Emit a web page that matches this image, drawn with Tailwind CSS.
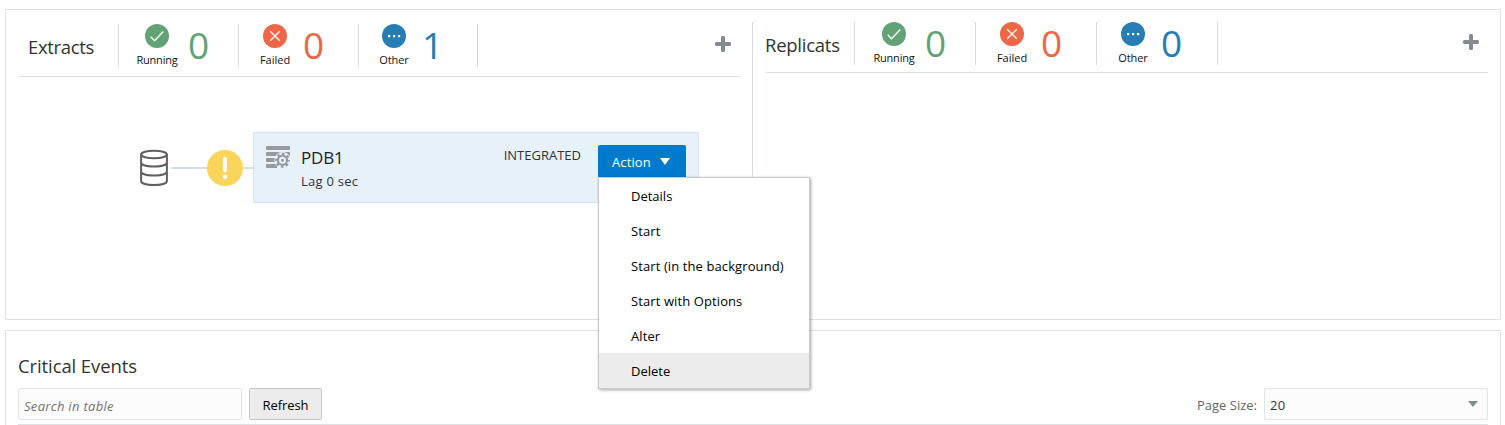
<!DOCTYPE html>
<html lang="en">
<head>
<meta charset="utf-8">
<title>Extracts and Replicats</title>
<script src="https://cdn.jsdelivr.net/npm/@tailwindcss/browser@4"></script>
</head>
<body class="h-[425px] overflow-hidden bg-white px-[5px] pt-[9px] pr-[4px] font-['Open_Sans','Noto_Sans',sans-serif] text-[13px] text-[#333]">
<svg class="hidden">
  <symbol id="ok" viewBox="0 0 24 24"><circle cx="12" cy="12" r="12" fill="#61a375"/><path d="M5.7 12.7l3.8 4L18.3 7.500" fill="none" stroke="#fff" stroke-width="1.3"/></symbol>
  <symbol id="fail" viewBox="0 0 24 24"><circle cx="12" cy="12" r="12" fill="#ed6647"/><path d="M7.200 7.200l9.600 9.600M16.800 7.200l-9.600 9.600" fill="none" stroke="#fff" stroke-width="1.3"/></symbol>
  <symbol id="other" viewBox="0 0 24 24"><circle cx="12" cy="12" r="12" fill="#267db3"/><path d="M6 11h2.200v2.200H6zM11 11h2.200v2.200H11zM16 11h2.200v2.200H16z" fill="#fff"/></symbol>
  <symbol id="plus" viewBox="0 0 16 16"><path d="M7 0h2l1 1v5h5l1 1v2l-1 1h-5v5l-1 1H7l-1-1v-5H1L0 9V7l1-1h5V1z" fill="#868b90"/></symbol>
</svg>

<main>
  <section class="flex h-[311px] border border-[#dfe1e3]">
    <div class="w-[746px] pt-[14px] pl-[12px]">
      <header class="flex h-[53px] w-[722px] border-b border-[#dfe1e3]">
        <h2 class="w-[100px] pl-[10px] text-[18.500px] leading-[46px] tracking-[-0.35px]">Extracts</h2>
        <div class="flex h-[43px] w-[120px] border-l border-[#d6dbe0]">
          <div class="flex w-[76px] flex-col items-center"><svg class="size-6 shrink-0"><use href="#ok"/></svg><span class="mt-[5px] text-[11px] leading-[14px] tracking-[-0.2px] text-[#111]">Running</span></div>
          <span class="-ml-[7px] text-[37px] leading-[41px] tracking-[-1px] text-[#61a375]">0</span>
        </div>
        <div class="flex h-[43px] w-[120px] border-l border-[#d6dbe0]">
          <div class="flex w-[72px] flex-col items-center"><svg class="size-6 shrink-0"><use href="#fail"/></svg><span class="mt-[5px] text-[11px] leading-[14px] text-[#111]">Failed</span></div>
          <span class="-ml-[8px] text-[37px] leading-[41px] text-[#ed6647]">0</span>
        </div>
        <div class="flex h-[43px] w-[120px] border-x border-[#d6dbe0]">
          <div class="flex w-[70px] flex-col items-center"><svg class="size-6 shrink-0"><use href="#other"/></svg><span class="mt-[5px] text-[11px] leading-[14px] tracking-[-0.1px] text-[#111]">Other</span></div>
          <span class="-ml-[7px] text-[37px] leading-[41px] text-[#267db3]">1</span>
        </div>
        <button class="mt-[12px] mr-[9px] ml-auto size-4"><svg class="size-4"><use href="#plus"/></svg></button>
      </header>

      <div class="mt-[55px] flex items-start pl-[121px]">
        <svg class="mt-[17px] h-[38px] w-[31px]" viewBox="0 0 31 38" fill="none" stroke="#606060" stroke-width="2"><ellipse cx="15" cy="5.500" rx="12.900" ry="3.800"/><path d="M2.100 5.500v26.500c0 2.400 5.800 4 12.900 4s12.900-1.600 12.900-4V5.500M2.100 13.500c0 2.400 5.800 4 12.900 4s12.900-1.600 12.900-4M2.100 22.500c0 2.400 5.800 4 12.900 4s12.900-1.600 12.900-4"/></svg>
        <i class="mt-[35px] ml-[1px] h-[2px] w-[36px] bg-[#d6dfe6]"></i>
        <svg class="mt-[18px] size-9" viewBox="0 0 36 36"><circle cx="18" cy="18" r="18" fill="#fad55c"/><path d="M18 9v11.500" stroke="#fff" stroke-width="4" stroke-linecap="round"/><circle cx="18" cy="26.700" r="2.200" fill="#fff"/></svg>
        <i class="mt-[35px] h-[2px] w-[10px] bg-[#d6dfe6]"></i>
        <article class="flex h-[71px] w-[446px] items-start border border-[#d0e5f7] bg-[#e7f1fa]">
          <svg class="mt-[13px] ml-[12px] h-[23px] w-[25px] shrink-0" viewBox="0 0 25 23">
            <path d="M1 0h22q1 0 1 1v2q0 1-1 1H1Q0 4 0 3V1q0-1 1-1M1 6h22q1 0 1 1v2q0 1-1 1H1q-1 0-1-1V7q0-1 1-1M1 12h10v4H1q-1 0-1-1v-2q0-1 1-1M1 18h10v4H1q-1 0-1-1v-2q0-1 1-1" fill="#969a9e"/>
            <circle cx="16.500" cy="14.300" r="8.200" fill="#e7f1fa"/>
            <circle cx="16.500" cy="14.300" r="4.600" fill="none" stroke="#969a9e" stroke-width="2.200"/>
            <circle cx="16.500" cy="14.300" r="6.400" fill="none" stroke="#969a9e" stroke-width="2.200" stroke-dasharray="2.400 2.627" stroke-dashoffset="1.200"/>
            <circle cx="16.500" cy="14.300" r="1.500" fill="#969a9e"/>
          </svg>
          <div class="ml-[10px] pt-[13px]"><h3 class="text-[17px] leading-6 tracking-[-0.2px] text-[#222]">PDB1</h3><p class="leading-[23px] tracking-[0.25px]">Lag 0 sec</p></div>
          <span class="mt-[12px] mr-[17px] ml-auto leading-5">INTEGRATED</span>
          <div class="relative mt-[12px] mr-[12px]">
            <button class="flex h-[32px] w-[88px] items-center rounded-t-[2px] bg-[#007acc] pl-[14px] text-white"><span class="pt-[3px] tracking-[0.1px]">Action</span><svg class="ml-auto mr-[16px] h-[7px] w-[10px]" viewBox="0 0 10 7"><path d="M0 0h10L5 7z" fill="#fff"/></svg></button>
            <ul class="absolute top-[32px] left-0 z-10 w-[212px] border border-[#c9c9c9] bg-white leading-[36px] tracking-[0.1px] text-black shadow-[1px_1px_3px_rgba(0,0,0,0.35)]">
              <li class="h-[35px] pl-[32px] tracking-normal">Details</li>
              <li class="h-[35px] pl-[32px]">Start</li>
              <li class="h-[35px] pl-[32px]">Start (in the background)</li>
              <li class="h-[35px] pl-[32px]">Start with Options</li>
              <li class="h-[35px] pl-[32px]">Alter</li>
              <li class="h-[35px] bg-[#ececec] pl-[32px] tracking-normal">Delete</li>
            </ul>
          </div>
        </article>
      </div>
    </div>

    <div class="mt-[12px] flex-1 border-l border-[#d6dbe0] pl-[12px]">
      <header class="flex h-[51px] w-[723px] border-b border-[#dfe1e3]">
        <h2 class="w-[89px] text-[18.500px] leading-[46px] tracking-[-0.25px]">Replicats</h2>
        <div class="flex h-[43px] w-[121px] border-l border-[#d6dbe0]">
          <div class="flex w-[78px] flex-col items-center"><svg class="size-6 shrink-0"><use href="#ok"/></svg><span class="mt-[5px] text-[11px] leading-[14px] tracking-[-0.2px] text-[#111]">Running</span></div>
          <span class="-ml-[8px] text-[37px] leading-[41px] text-[#61a375]">0</span>
        </div>
        <div class="flex h-[43px] w-[121px] border-l border-[#d6dbe0]">
          <div class="flex w-[72px] flex-col items-center"><svg class="size-6 shrink-0"><use href="#fail"/></svg><span class="mt-[5px] text-[11px] leading-[14px] text-[#111]">Failed</span></div>
          <span class="-ml-[7px] text-[37px] leading-[41px] text-[#ed6647]">0</span>
        </div>
        <div class="flex h-[43px] w-[122px] border-x border-[#d6dbe0]">
          <div class="flex w-[72px] flex-col items-center"><svg class="size-6 shrink-0"><use href="#other"/></svg><span class="mt-[5px] text-[11px] leading-[14px] tracking-[-0.1px] text-[#111]">Other</span></div>
          <span class="-ml-[8px] text-[37px] leading-[41px] text-[#267db3]">0</span>
        </div>
        <button class="mt-[12px] mr-[9px] ml-auto size-4"><svg class="size-4"><use href="#plus"/></svg></button>
      </header>
    </div>
  </section>

  <section class="mt-[10px] h-[95px] border border-b-0 border-[#dfe1e3] px-[12px] pt-[20px]">
    <h2 class="text-[18.500px] leading-[30px] tracking-[-0.1px]">Critical Events</h2>
    <div class="mt-[7px] flex items-center">
      <input class="h-[32px] w-[224px] rounded-[2px] border border-[#dfe4e7] bg-[#fcfcfc] px-[5px] pt-[3px] tracking-[0.3px] italic placeholder:text-[#737373]" placeholder="Search in table">
      <button class="ml-[7px] h-[32px] w-[73px] rounded-[2px] border border-[#c4c8cb] bg-[#ececec] pt-[3px] tracking-[-0.1px] text-black">Refresh</button>
      <label class="mr-[7px] ml-auto pt-[3px] text-[#666]">Page Size:</label>
      <div class="flex h-[32px] w-[224px] items-center justify-between rounded-[2px] border border-[#dfe4e7] bg-[#fcfcfc] pr-[9px] pl-[5px]"><span class="pt-[3px] tracking-[0.3px]">20</span><svg class="h-[6px] w-[10px]" viewBox="0 0 10 6"><path d="M0 0h10L5 6z" fill="#868b90"/></svg></div>
    </div>
    <div class="mt-[4px] border-t border-[#dfe1e3]"></div>
  </section>
</main>
</body>
</html>
